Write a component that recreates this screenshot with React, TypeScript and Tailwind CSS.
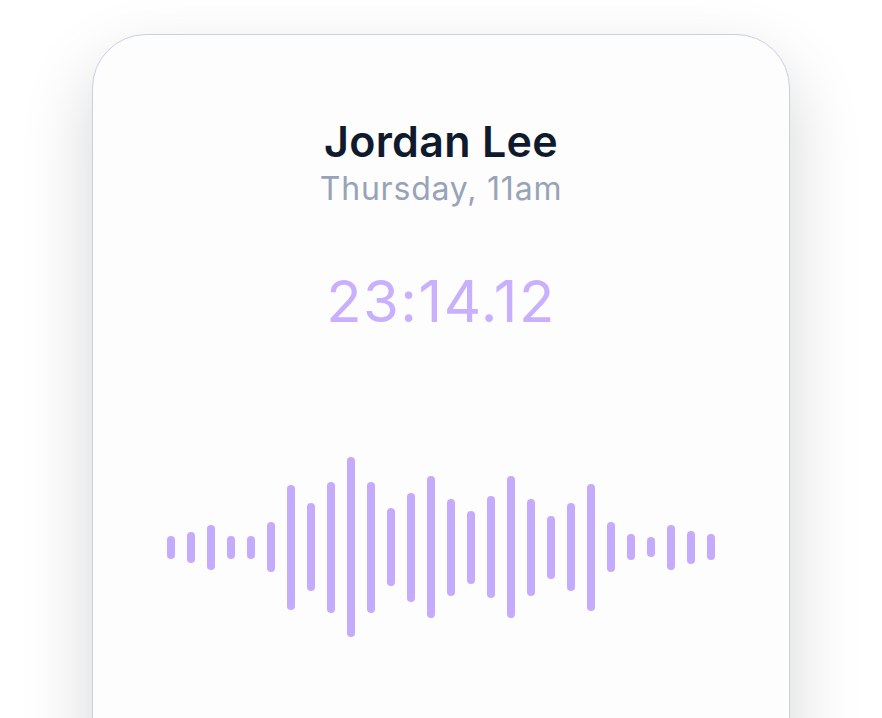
const bars = [23, 31, 45, 23, 23, 50, 125, 88, 131, 180, 131, 78, 109, 142, 97, 73, 102, 142, 97, 63, 88, 127, 50, 26, 20, 45, 33, 26];

export default function App() {
  return (
    <div className="h-[718px] w-full overflow-hidden bg-white font-['Inter',sans-serif]">
      <div className="flex justify-center pt-[34px]">
        <div className="flex h-[800px] w-[698px] flex-col items-center rounded-[54px] border border-[#c9d0df] bg-[#fdfdfe] pt-[79px] shadow-[0_30px_70px_rgba(0,0,0,0.17)]">
          <h1 className="text-[43px] font-semibold leading-[54px] tracking-[0.3px] text-[#0f1b2d]">Jordan Lee</h1>
          <p className="mt-px text-[32px] leading-[40px] tracking-[0.8px] text-[#98a3b8]">Thursday, 11am</p>
          <p className="mt-[57px] text-[58px] leading-[70px] tracking-[1.5px] text-[#c9b0fd]">23:14.12</p>
          <div className="mt-[120px] flex h-[182px] items-center gap-[12px]">
            {bars.map((h, i) => (
              <div key={i} className="w-[8px] rounded-full bg-[#c5abfb]" style={{ height: h }} />
            ))}
          </div>
        </div>
      </div>
    </div>
  );
}
